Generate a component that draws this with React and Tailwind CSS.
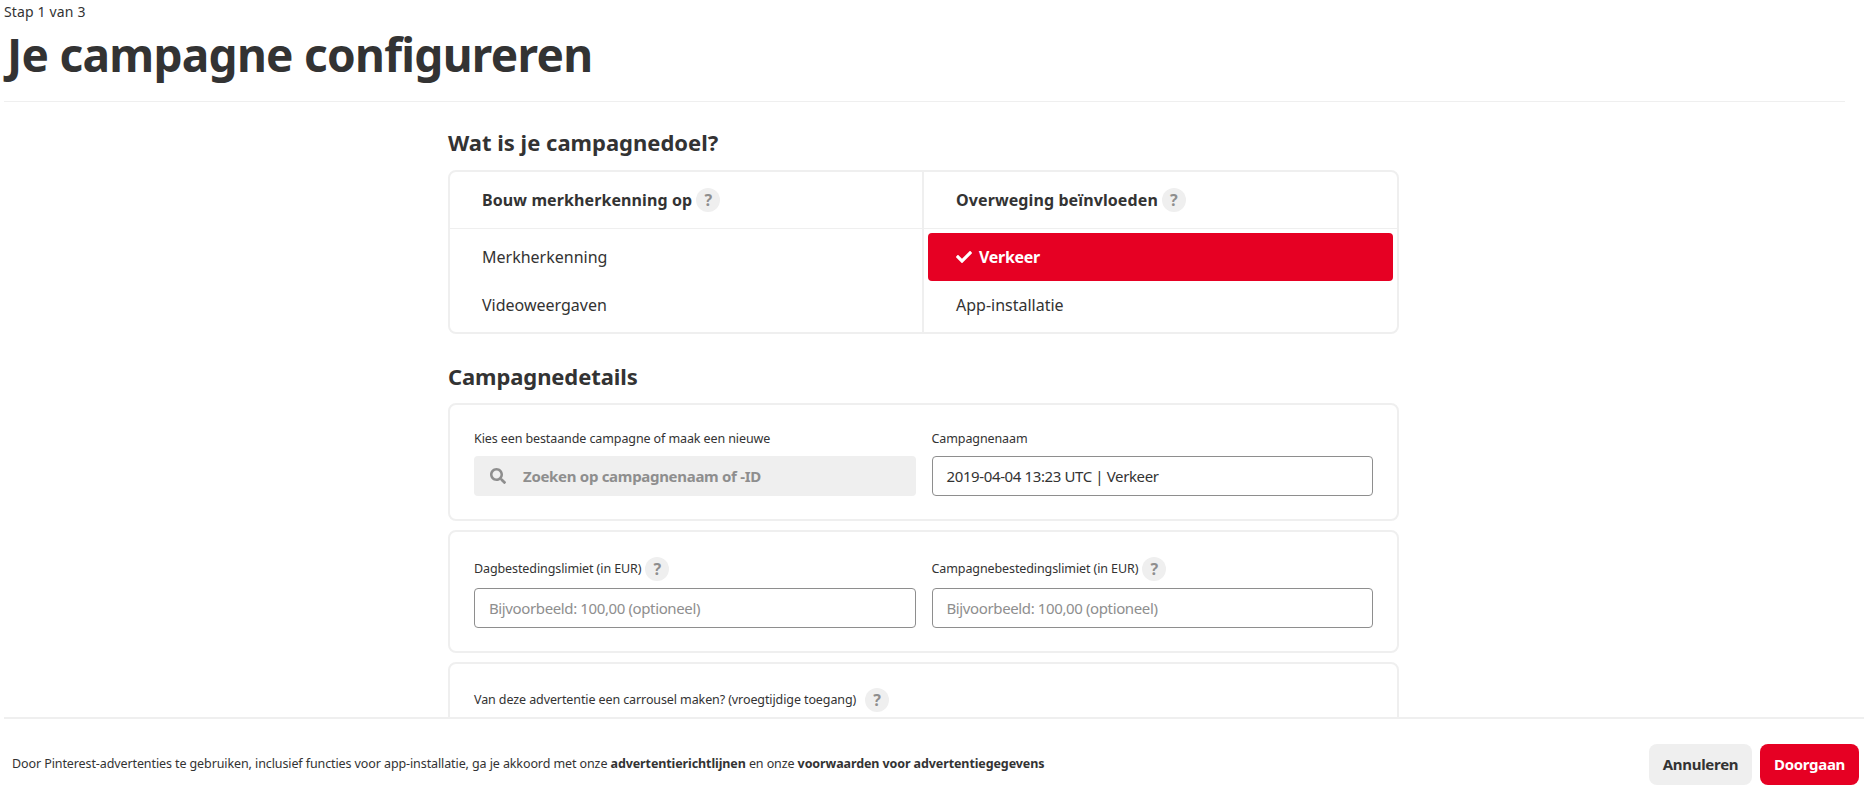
import React from "react";
import { FaCheck, FaSearch } from "react-icons/fa";

const font = "font-['Noto_Sans','Open_Sans',sans-serif]";

function Help({ wide }) {
  return (
    <span className={`flex h-6 w-6 shrink-0 items-center justify-center rounded-full bg-[#efefef] text-[16px] font-bold tracking-normal text-[#8e8e8e] ${wide ? "ml-[9px]" : "ml-1"}`}>
      ?
    </span>
  );
}

function Field({ label, help, wide, children }) {
  return (
    <div className="flex min-w-0 flex-1 flex-col">
      <div className="flex h-6 items-center text-[12.5px] tracking-[-0.1px] text-[#333]">
        {label}
        {help && <Help wide={wide} />}
      </div>
      {children}
    </div>
  );
}

function TextBox({ value, placeholder }) {
  return (
    <div className="flex h-10 items-center rounded-[4px] border border-[#8e8e8e] px-[14px] text-[15px] tracking-[-0.38px]">
      {value ? <span className="text-[#333]">{value}</span> : <span className="text-[#8e8e8e]">{placeholder}</span>}
    </div>
  );
}

function GoalColumn({ title, children, first }) {
  return (
    <div className={`flex flex-col ${first ? "w-[474px] border-r-2 border-[#efefef]" : "flex-1"}`}>
      <div className="flex h-[57px] items-center border-b border-[#efefef] pl-[32px] text-[16px] font-bold tracking-[0.1px] text-[#333]">
        {title}
        <Help />
      </div>
      <div className="flex flex-col px-1 pt-1">{children}</div>
    </div>
  );
}

function Goal({ label, selected }) {
  if (selected) {
    return (
      <div className="flex h-12 items-center rounded-[4px] bg-[#e60023] pl-[28px] text-[16px] font-bold tracking-[-0.3px] text-white">
        <FaCheck className="mr-[7px] h-4 w-4" />
        {label}
      </div>
    );
  }
  return <div className="flex h-12 items-center pl-[28px] text-[16px] text-[#333]">{label}</div>;
}

export default function App() {
  return (
    <div className={`flex h-screen flex-col overflow-hidden bg-white ${font}`}>
      <main className="min-h-0 flex-1 overflow-hidden">
        <header className="mr-[19px] ml-1 h-[102px] border-b border-[#efefef] pt-[2px]">
          <div className="text-[14px] leading-[20px] tracking-[0.15px] text-[#333]">Stap 1 van 3</div>
          <h1 className="mt-1 pl-[3px] text-[46px] leading-[56px] font-bold tracking-[-0.73px] text-[#333]">Je campagne configureren</h1>
        </header>

        <div className="ml-[448px] w-[951px]">
          <h2 className="mt-[24px] mb-[12px] text-[22px] leading-[32px] font-bold text-[#333]">Wat is je campagnedoel?</h2>
          <section className="flex h-[164px] rounded-lg border-2 border-[#efefef]">
            <GoalColumn title="Bouw merkherkenning op" first>
              <Goal label="Merkherkenning" />
              <Goal label="Videoweergaven" />
            </GoalColumn>
            <GoalColumn title="Overweging beïnvloeden">
              <Goal label="Verkeer" selected />
              <Goal label="App-installatie" />
            </GoalColumn>
          </section>

          <h2 className="mt-[26px] mb-[11px] text-[22px] leading-[32px] font-bold tracking-[-0.1px] text-[#333]">Campagnedetails</h2>
          <section className="flex h-[118px] gap-4 rounded-lg border-2 border-[#efefef] px-6 pt-[22px]">
            <Field label="Kies een bestaande campagne of maak een nieuwe">
              <div className="mt-[5px] flex h-10 items-center rounded-[4px] bg-[#efefef] pl-4 text-[15px] font-bold tracking-[-0.3px] text-[#8e8e8e]">
                <FaSearch className="mr-[17px] h-4 w-4" />
                Zoeken op campagnenaam of -ID
              </div>
            </Field>
            <Field label="Campagnenaam">
              <div className="mt-[5px]">
                <TextBox value="2019-04-04 13:23 UTC | Verkeer" />
              </div>
            </Field>
          </section>

          <section className="mt-[9px] flex h-[123px] gap-4 rounded-lg border-2 border-[#efefef] px-6 pt-[25px]">
            <Field label="Dagbestedingslimiet (in EUR)" help>
              <div className="mt-[7px]">
                <TextBox placeholder="Bijvoorbeeld: 100,00 (optioneel)" />
              </div>
            </Field>
            <Field label="Campagnebestedingslimiet (in EUR)" help>
              <div className="mt-[7px]">
                <TextBox placeholder="Bijvoorbeeld: 100,00 (optioneel)" />
              </div>
            </Field>
          </section>

          <section className="mt-[9px] h-[123px] rounded-lg border-2 border-[#efefef] px-6 pt-[24px]">
            <Field label="Van deze advertentie een carrousel maken? (vroegtijdige toegang)" help wide />
          </section>
        </div>
      </main>

      <footer className="ml-1 flex h-[85px] shrink-0 items-center justify-between border-t-2 border-[#efefef] bg-white pt-[7px] pr-[5px] pl-2">
        <p className="text-[12.5px] tracking-[-0.1px] text-[#333]">
          Door Pinterest-advertenties te gebruiken, inclusief functies voor app-installatie, ga je akkoord met onze{" "}
          <b className="font-bold">advertentierichtlijnen</b> en onze <b className="font-bold">voorwaarden voor advertentiegegevens</b>
        </p>
        <div className="flex gap-2">
          <button className="h-[41px] w-[103px] rounded-lg bg-[#efefef] text-[15px] font-bold tracking-[-0.3px] text-[#333]">Annuleren</button>
          <button className="h-[41px] w-[99px] rounded-lg bg-[#e60023] text-[15px] font-bold tracking-[-0.3px] text-white">Doorgaan</button>
        </div>
      </footer>
    </div>
  );
}
